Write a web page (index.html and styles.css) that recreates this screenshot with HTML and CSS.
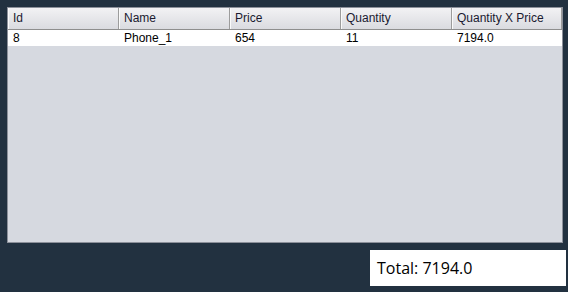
FILE: index.html
```html
<!DOCTYPE html>
<html>
<head>
<meta charset="utf-8">
<link rel="stylesheet" href="styles.css">
</head>
<body>
<div class="frame">
  <div class="scroll">
    <div class="table">
      <div class="head">
        <div class="hc">Id</div>
        <div class="hc">Name</div>
        <div class="hc">Price</div>
        <div class="hc">Quantity</div>
        <div class="hc last">Quantity X Price</div>
      </div>
      <div class="row">
        <div class="c">8</div>
        <div class="c">Phone_1</div>
        <div class="c">654</div>
        <div class="c">11</div>
        <div class="c">7194.0</div>
      </div>
    </div>
  </div>
  <div class="footer">
    <div class="total">Total: 7194.0</div>
  </div>
</div>
</body>
</html>
```
FILE: styles.css
```css
html, body {
  margin: 0;
  padding: 0;
  background: #223140;
  width: 568px;
  height: 292px;
  overflow: hidden;
}
.frame {
  padding: 7px 6px 0 7px;
  display: flex;
  flex-direction: column;
}
.scroll {
  width: 554px;
  height: 234px;
  border: 1px solid #8c909a;
  background: #d6d9e0;
}
.table {
  font-family: "Liberation Sans", Arial, sans-serif;
  font-size: 12px;
  color: #000;
}
.head {
  display: grid;
  grid-template-columns: 111px 111px 111px 111px 110px;
  height: 21px;
  background: linear-gradient(#f2f2f4, #dadbe0);
  border-bottom: 1px solid #8e8e8e;
}
.hc {
  padding-left: 5px;
  line-height: 21px;
  border-right: 1px solid #9c9c9c;
  box-shadow: inset 1px 0 0 #fafafa;
  color: #1a1a30;
}
.row {
  display: grid;
  grid-template-columns: 111px 111px 111px 111px 110px;
  height: 16px;
  background: #fff;
}
.c {
  padding-left: 5px;
  line-height: 16px;
}
.footer {
  display: flex;
  justify-content: flex-end;
  margin-top: 7px;
  margin-right: -4px;
}
.total {
  width: 189px;
  height: 36px;
  background: #fff;
  padding-left: 7px;
  font-family: "Open Sans", "DejaVu Sans", sans-serif;
  font-size: 16px;
  line-height: 37px;
  color: #000;
}
```
